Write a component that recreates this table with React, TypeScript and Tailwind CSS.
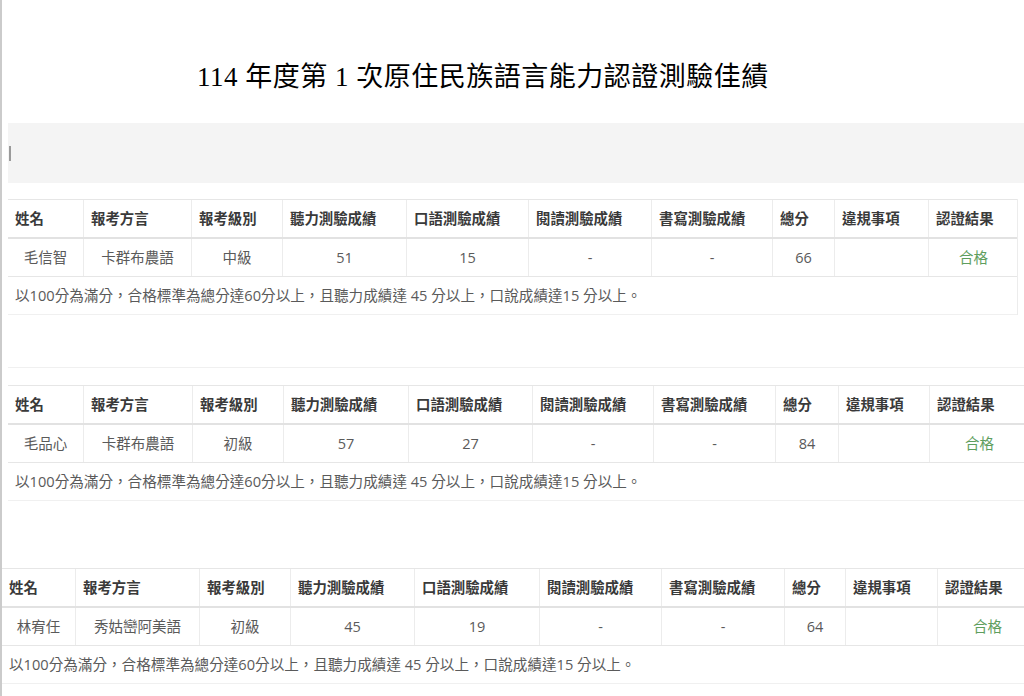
const headers = ['姓名', '報考方言', '報考級別', '聽力測驗成績', '口語測驗成績', '閱讀測驗成績', '書寫測驗成績', '總分', '違規事項', '認證結果']

type Row = { name: string; dialect: string; level: string; listen: string; speak: string; total: string }

const note = '以100分為滿分，合格標準為總分達60分以上，且聽力成績達 45 分以上，口說成績達15 分以上。'

function ScoreTable({ row, cols }: { row: Row; cols: string }) {
  const cells = [row.name, row.dialect, row.level, row.listen, row.speak, '-', '-', row.total, '', '合格']
  return (
    <div className="border-t border-[#e6e6e6]">
      <div className={`grid ${cols} h-[39px] border-b-2 border-[#e2e2e2]`}>
        {headers.map((h, i) => (
          <div key={h} className={`flex items-center px-[7px] text-[14.4px] font-bold text-[#3a3a3a] ${i > 0 ? 'border-l border-[#ececec]' : ''}`}>
            {h}
          </div>
        ))}
      </div>
      <div className={`grid ${cols} h-[38px] border-b border-[#e6e6e6]`}>
        {cells.map((c, i) => (
          <div
            key={i}
            className={`flex items-center justify-center text-[14.5px] ${i === 9 ? 'text-[#5e9e5e]' : 'text-[#5a5a5a]'} ${i > 0 ? 'border-l border-[#ececec]' : ''}`}
          >
            {c}
          </div>
        ))}
      </div>
      <div className="flex h-[38px] items-center border-b border-[#f0f0f0] px-[7px] text-[14.6px] text-[#5a5a5a]">{note}</div>
    </div>
  )
}

export default function App() {
  return (
    <div
      lang="zh-Hant-TW"
      className="h-[696px] w-[1024px] overflow-hidden border-l-2 border-[#cbcbcb] bg-white"
      style={{ fontFamily: '"Open Sans", "Noto Sans CJK TC", sans-serif' }}
    >
      <h1
        className="mt-[61px] pl-[195px] text-[27px] leading-[32px] tracking-[0.5px] text-black"
        style={{ fontFamily: '"Liberation Serif", "Noto Sans CJK TC", serif' }}
      >
        114 年度第 1 次原住民族語言能力認證測驗佳績
      </h1>

      <div className="ml-[6px] mt-[30px] flex h-[60px] items-center bg-[#f4f4f4]">
        <div className="ml-[1px] h-[15px] w-[2px] bg-[#9a9a9a]" />
      </div>

      <div className="ml-[6px] mt-[16px] w-[1010px] border-r border-[#ececec]">
        <ScoreTable
          cols="grid-cols-[75px_108px_91px_124px_122px_123px_121px_62px_94px_90px]"
          row={{ name: '毛信智', dialect: '卡群布農語', level: '中級', listen: '51', speak: '15', total: '66' }}
        />
      </div>

      <div className="ml-[6px] mt-[52px] border-t border-[#f0f0f0] pt-[17px]">
        <ScoreTable
          cols="grid-cols-[75px_109px_91px_125px_124px_121px_122px_63px_91px_100px]"
          row={{ name: '毛品心', dialect: '卡群布農語', level: '初級', listen: '57', speak: '27', total: '84' }}
        />
      </div>

      <div className="mt-[67px]">
        <ScoreTable
          cols="grid-cols-[73px_124px_91px_124px_125px_122px_123px_61px_92px_100px]"
          row={{ name: '林宥任', dialect: '秀姑巒阿美語', level: '初級', listen: '45', speak: '19', total: '64' }}
        />
      </div>
    </div>
  )
}
